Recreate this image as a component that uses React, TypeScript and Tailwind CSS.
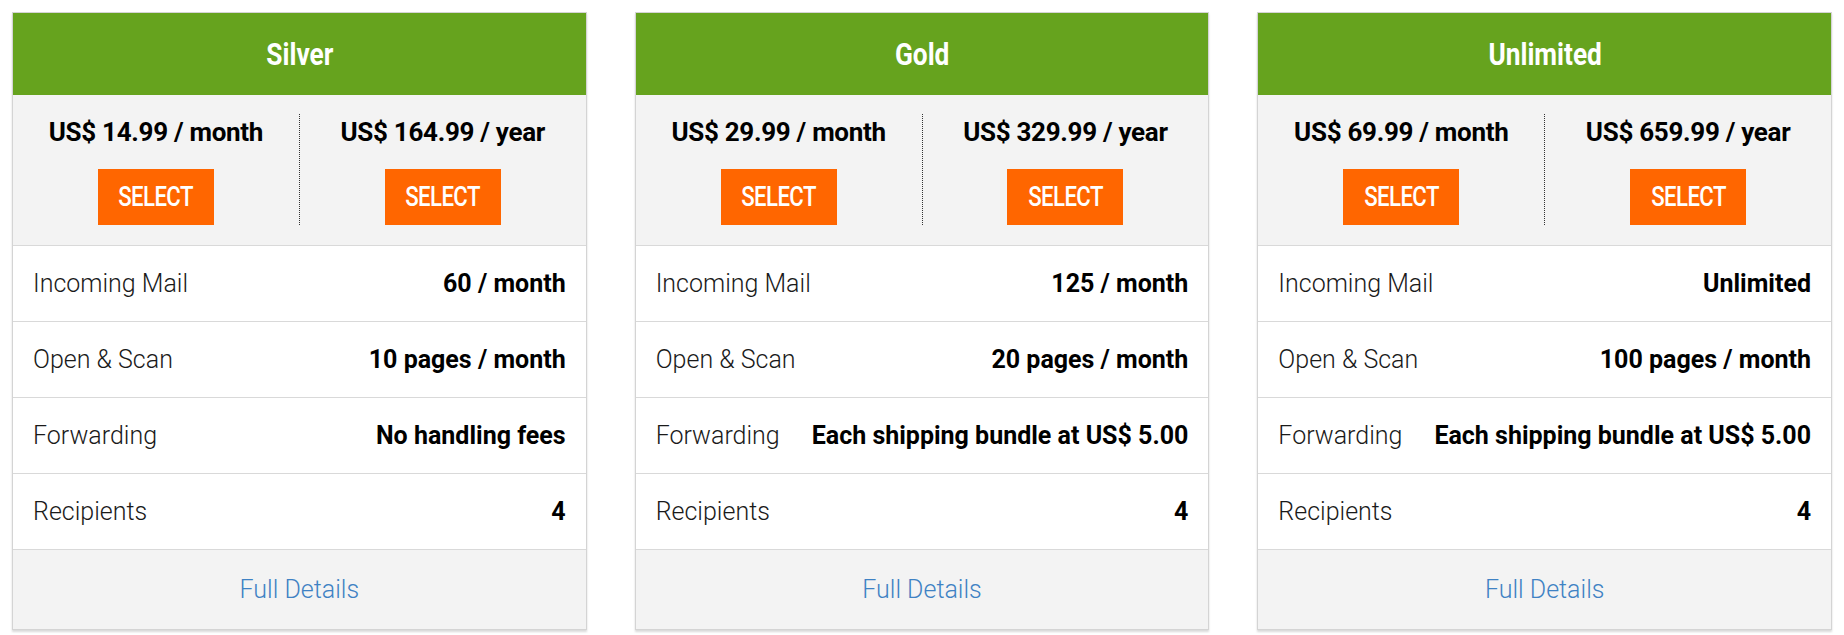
import React from 'react';

const PLANS = [
  {
    name: 'Silver',
    monthly: 'US$ 14.99 / month',
    yearly: 'US$ 164.99 / year',
    rows: [
      ['Incoming Mail', '60 / month'],
      ['Open & Scan', '10 pages / month'],
      ['Forwarding', 'No handling fees'],
      ['Recipients', '4'],
    ],
  },
  {
    name: 'Gold',
    monthly: 'US$ 29.99 / month',
    yearly: 'US$ 329.99 / year',
    rows: [
      ['Incoming Mail', '125 / month'],
      ['Open & Scan', '20 pages / month'],
      ['Forwarding', 'Each shipping bundle at US$ 5.00'],
      ['Recipients', '4'],
    ],
  },
  {
    name: 'Unlimited',
    monthly: 'US$ 69.99 / month',
    yearly: 'US$ 659.99 / year',
    rows: [
      ['Incoming Mail', 'Unlimited'],
      ['Open & Scan', '100 pages / month'],
      ['Forwarding', 'Each shipping bundle at US$ 5.00'],
      ['Recipients', '4'],
    ],
  },
];

function PriceColumn({ price, divider }: { price: string; divider?: boolean }) {
  return (
    <div
      className={`flex-1 flex flex-col items-center ${
        divider ? 'border-l border-dotted border-[#333]' : ''
      }`}
    >
      <div className="h-[36px] flex items-center text-[26px] font-bold text-black tracking-[-0.3px]">
        {price}
      </div>
      <button className="mt-[19px] w-[116px] h-[56px] bg-[#ff6600] text-white flex items-center justify-center">
        <span className="inline-block scale-x-[0.82] text-[27px] font-medium tracking-tight">SELECT</span>
      </button>
    </div>
  );
}

export default function App() {
  return (
    <div
      className="w-[1844px] h-[635px] bg-white flex gap-[48px] px-[12px] pt-[12px]"
      style={{ fontFamily: 'Roboto, "Noto Sans", "Liberation Sans", sans-serif' }}
    >
      {PLANS.map((plan) => (
        <div
          key={plan.name}
          className="flex-1 flex flex-col h-[618px] border border-[#d4d4d4] shadow-[0_2px_2px_rgba(0,0,0,0.15)]"
        >
          {/* Header */}
          <div className="h-[82px] bg-[#66a31e] flex items-center justify-center">
            <span className="inline-block scale-x-[0.82] text-[32px] font-bold text-white">
              {plan.name}
            </span>
          </div>

          {/* Prices */}
          <div className="h-[151px] bg-[#f3f3f3] flex pt-[19px] pb-[20px] border-b border-[#d9d9d9]">
            <PriceColumn price={plan.monthly} />
            <PriceColumn price={plan.yearly} divider />
          </div>

          {/* Features */}
          {plan.rows.map(([label, value]) => (
            <div
              key={label}
              className="h-[76px] flex items-center justify-between px-[20px] border-b border-[#d9d9d9] text-[25px]"
            >
              <span className="font-light text-[#1a1a1a]">{label}</span>
              <span className="font-bold text-black">{value}</span>
            </div>
          ))}

          {/* Footer */}
          <div className="flex-1 bg-[#f3f3f3] flex items-center justify-center">
            <a href="#" className="text-[25px] font-light text-[#3f82c4]">
              Full Details
            </a>
          </div>
        </div>
      ))}
    </div>
  );
}
